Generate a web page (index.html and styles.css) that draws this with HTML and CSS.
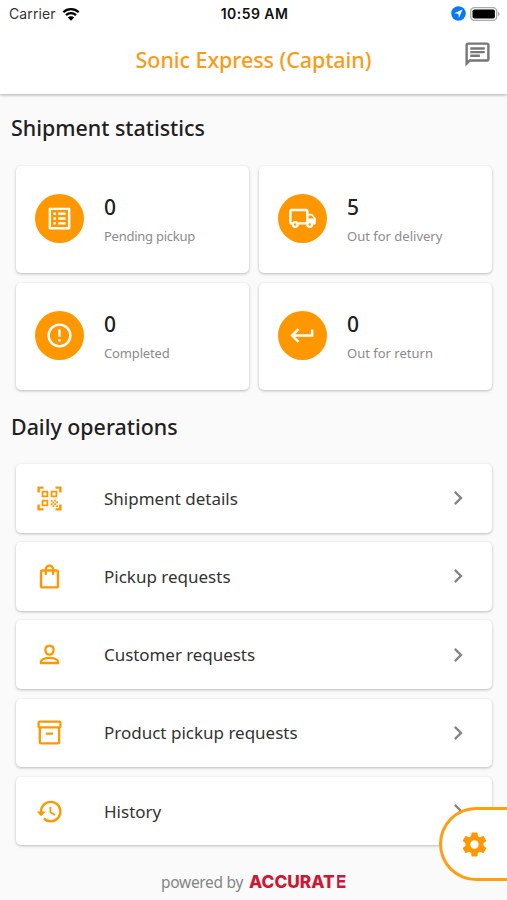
FILE: index.html
```html
<!DOCTYPE html>
<html lang="en">
<head>
<meta charset="utf-8">
<meta name="viewport" content="width=device-width">
<title>Sonic Express (Captain)</title>
<link rel="stylesheet" href="styles.css">
</head>
<body>
<header class="header">
  <div class="status">
    <div class="status-side"><span class="carrier">Carrier</span>
      <svg class="wifi" viewBox="0 0 18 14"><path d="M1.3 5.2a11 11 0 0 1 15.4 0M4 8.2a7.2 7.2 0 0 1 10 0" fill="none" stroke="#000" stroke-width="2.3"/><path d="M9 13.8 5.8 10.600a4.600 4.600 0 0 1 6.400 0z"/></svg>
    </div>
    <span class="time">10:59 AM</span>
    <div class="status-side status-right">
      <svg class="location" viewBox="0 0 15 15"><circle cx="7.500" cy="7.500" r="7.300" fill="#087bf4"/><path d="M11.500 3.500 3.200 7.200l4.200.5.500 4.200z" fill="#fff"/></svg>
      <svg class="battery" viewBox="0 0 30 14"><rect x=".7" y=".7" width="26" height="12.600" rx="3.600" fill="#fff" stroke="#aaa" stroke-width="1.300"/><rect x="2.500" y="2.500" width="22.400" height="9" rx="1.800"/><path d="M28 5c2 .6 2 3.400 0 4z" fill="#aaa"/></svg>
    </div>
  </div>
  <div class="appbar">
    <h1 class="title">Sonic Express (Captain)</h1>
    <svg class="icon chat" viewBox="0 0 24 24"><path d="M4 4h16v12H5.170L4 17.170V4m0-2c-1.100 0-1.990.9-1.990 2L2 22l4-4h14c1.100 0 2-.9 2-2V4c0-1.100-.9-2-2-2H4zm2 10h8v2H6v-2zm0-3h12v2H6V9zm0-3h12v2H6V6z"/></svg>
  </div>
</header>
<main class="content">
  <h2 class="heading heading-stats">Shipment statistics</h2>
  <section class="stats">
    <article class="card stat"><span class="badge"><svg class="icon" viewBox="0 0 24 24"><path d="M19 5v14H5V5h14m1.100-2H3.900c-.5 0-.9.4-.9.900v16.200c0 .4.4.9.9.900h16.200c.4 0 .9-.5.9-.9V3.900c0-.5-.5-.9-.9-.9zM11 7h6v2h-6V7zm0 4h6v2h-6v-2zm0 4h6v2h-6v-2zM7 7h2v2H7V7zm0 4h2v2H7v-2zm0 4h2v2H7v-2z"/></svg></span><div><div class="count">0</div><div class="label pending">Pending pickup</div></div></article>
    <article class="card stat"><span class="badge"><svg class="icon" viewBox="0 0 24 24"><path fill-rule="evenodd" d="M19.500 8H17V6c0-1.100-.9-2-2-2H3c-1.100 0-2 .9-2 2v9c0 1.100.9 2 2 2 0 1.660 1.340 3 3 3s3-1.340 3-3h6c0 1.660 1.340 3 3 3s3-1.340 3-3h1c.55 0 1-.45 1-1v-3.330c0-.43-.14-.85-.4-1.200L20.300 8.400c-.19-.25-.49-.4-.8-.4zM6 18a1 1 0 1 1 0-2 1 1 0 0 1 0 2zm9-3H8.220a3 3 0 0 0-4.440 0H3V6h12v9zm3 3a1 1 0 1 1 0-2 1 1 0 0 1 0 2zm-1-6V9.500h2.500l1.960 2.500H17z"/></svg></span><div><div class="count">5</div><div class="label">Out for delivery</div></div></article>
    <article class="card stat"><span class="badge"><svg class="icon" viewBox="0 0 24 24"><path d="M11 15h2v2h-2zm0-8h2v6h-2z"/><circle cx="12" cy="12" r="9" fill="none" stroke="currentColor" stroke-width="2"/></svg></span><div><div class="count">0</div><div class="label completed">Completed</div></div></article>
    <article class="card stat"><span class="badge"><svg class="icon" viewBox="0 0 24 24"><path d="M19 7v4H5.830l3.580-3.590L8 6l-6 6 6 6 1.410-1.410L5.830 13H21V7z"/></svg></span><div><div class="count">0</div><div class="label">Out for return</div></div></article>
  </section>
  <h2 class="heading heading-daily">Daily operations</h2>
  <nav class="operations">
    <a class="card operation"><svg class="icon" viewBox="0 0 24 24"><path d="M2 7V2h5v2H4v3zM17 2h5v5h-2V4h-3zM2 17h2v3h3v2H2zM20 17h2v5h-5v-2h3z"/><path d="M6.250 6.250h4v4h-4zM13.750 6.250h4v4h-4zM6.250 13.750h4v4h-4z" fill="none" stroke="currentColor" stroke-width="1.500"/><path d="M13 13h1.500v1.500H13zM16 13h1.500v1.500H16zM14.500 14.500H16V16h-1.500zM17.500 14.500H19V16h-1.500zM13 16h1.500v1.500H13zM16 16h1.500v1.500H16zM14.500 17.500H16V19h-1.500zM17.500 17.500H19V19h-1.500z"/></svg><span class="name">Shipment details</span><svg class="icon chevron" viewBox="0 0 24 24"><path d="M10 6 8.590 7.410 13.170 12l-4.580 4.590L10 18l6-6z"/></svg></a>
    <a class="card operation"><svg class="icon" viewBox="0 0 24 24"><path d="M18 6h-2c0-2.210-1.790-4-4-4S8 3.790 8 6H6c-1.100 0-2 .9-2 2v12c0 1.100.9 2 2 2h12c1.100 0 2-.9 2-2V8c0-1.100-.9-2-2-2zm-6-2c1.100 0 2 .9 2 2h-4c0-1.100.9-2 2-2zm6 16H6V8h2v2c0 .55.450 1 1 1s1-.45 1-1V8h4v2c0 .55.450 1 1 1s1-.45 1-1V8h2v12z"/></svg><span class="name">Pickup requests</span><svg class="icon chevron" viewBox="0 0 24 24"><path d="M10 6 8.590 7.410 13.170 12l-4.580 4.590L10 18l6-6z"/></svg></a>
    <a class="card operation"><svg class="icon" viewBox="0 0 24 24"><g fill="none" stroke="currentColor" stroke-width="1.900"><path d="M12 4.900c-2.400 0-3.400 1.300-3.400 3.200 0 2.200 1 4 3.400 4s3.400-1.800 3.400-4c0-1.900-1-3.200-3.400-3.200z"/><path d="M4.950 19.050v-1.200c0-1.700 3.300-3 7.050-3s7.050 1.300 7.050 3v1.200z"/></g></svg><span class="name customer">Customer requests</span><svg class="icon chevron" viewBox="0 0 24 24"><path d="M10 6 8.590 7.410 13.170 12l-4.580 4.590L10 18l6-6z"/></svg></a>
    <a class="card operation"><svg class="icon" viewBox="0 0 24 24"><g fill="none" stroke="currentColor" stroke-width="1.900"><rect x="2.950" y="2.950" width="18.100" height="4.800" rx="1"/><path d="M4 7.750v12.300q0 1 1 1h14q1 0 1-1V7.750M9 13h6"/></g></svg><span class="name">Product pickup requests</span><svg class="icon chevron" viewBox="0 0 24 24"><path d="M10 6 8.590 7.410 13.170 12l-4.580 4.590L10 18l6-6z"/></svg></a>
    <a class="card operation"><svg class="icon" viewBox="0 0 24 24"><path d="M13 3a9 9 0 0 0-9 9H1.500L5 15.900 9 12H6c0-3.870 3.130-7 7-7s7 3.130 7 7-3.130 7-7 7c-1.930 0-3.680-.79-4.940-2.060l-1.420 1.420A8.950 8.950 0 0 0 13 21a9 9 0 0 0 0-18zm-1 5v5l4.280 2.540.72-1.210-3.500-2.080V8H12z"/></svg><span class="name">History</span><svg class="icon chevron" viewBox="0 0 24 24"><path d="M10 6 8.590 7.410 13.170 12l-4.580 4.590L10 18l6-6z"/></svg></a>
  </nav>
</main>
<footer class="footer"><span class="powered">powered by</span><span class="brand">ACCURAT<span class="brand-e">E</span></span></footer>
<button class="settings" aria-label="Settings"><svg class="icon" viewBox="0 0 24 24"><path d="M19.430 12.980c.04-.32.070-.64.070-.98s-.03-.66-.07-.98l2.110-1.650c.19-.15.240-.42.120-.64l-2-3.460c-.12-.22-.39-.3-.61-.22l-2.490 1c-.52-.4-1.080-.73-1.690-.98l-.38-2.650C14.460 2.180 14.250 2 14 2h-4c-.25 0-.46.18-.49.420l-.38 2.650c-.61.250-1.170.590-1.690.980l-2.490-1c-.23-.09-.49 0-.61.220l-2 3.460c-.13.220-.07.490.120.640l2.110 1.650c-.04.320-.07.650-.07.980s.03.660.070.980l-2.110 1.650c-.19.150-.24.420-.12.640l2 3.460c.12.220.39.300.61.220l2.490-1c.52.400 1.080.730 1.690.980l.38 2.650c.03.240.240.420.490.420h4c.25 0 .46-.18.490-.42l.38-2.650c.61-.25 1.170-.59 1.690-.98l2.490 1c.23.090.490 0 .61-.22l2-3.460c.12-.22.070-.49-.12-.64l-2.110-1.650zM12 15.500a3.500 3.500 0 1 1 0-7 3.500 3.500 0 0 1 0 7z"/></svg></button>
</body>
</html>
```
FILE: styles.css
```css
* { box-sizing: border-box; }
body { margin: 0; height: 900px; overflow: hidden; position: relative; background: #fafafa; color: #202020; font-family: "Noto Sans", "Open Sans", sans-serif; }
h1, h2 { margin: 0; font-weight: 500; }
.icon { display: block; flex: none; width: 29px; height: 29px; fill: currentColor; }
.header { height: 94px; background: #fff; box-shadow: 0 1px 3px rgba(0,0,0,.32); }
.status { display: grid; grid-template-columns: 1fr auto 1fr; align-items: center; height: 27px; padding: 0 7px 0 9px; font-family: Inter, sans-serif; font-size: 14px; }
.status-side { display: flex; align-items: center; gap: 6px; }
.status-right { justify-content: flex-end; gap: 4px; }
.carrier { color: #333; letter-spacing: .1px; }
.time { font-weight: 600; font-size: 14px; letter-spacing: .45px; color: #111; }
.wifi { width: 18px; height: 14px; }
.location { width: 15px; height: 15px; }
.battery { width: 30px; height: 14px; }
.appbar { display: grid; grid-template-columns: 45px 1fr 45px; align-items: center; height: 65px; }
.title { grid-column: 2; text-align: center; color: #f99b18; font-size: 21.5px; letter-spacing: -.07px; line-height: 30px; white-space: nowrap; }
.chat { color: #777; margin: -10px 0 0 1px; }
.content { padding: 0 15px 0 16px; }
.heading { margin-left: -5px; font-size: 21.4px; line-height: 30px; white-space: nowrap; }
.heading-stats { padding-top: 19px; height: 71.5px; }
.card { background: #fff; border-radius: 5px; box-shadow: 0 1px 3px rgba(0,0,0,.26); }
.stats { display: grid; grid-template-columns: 1fr 1fr; grid-auto-rows: 107px; gap: 10px; }
.stat { display: flex; align-items: center; gap: 20px; padding: 0 19px 2px; }
.badge { display: grid; place-items: center; width: 49px; height: 49px; border-radius: 50%; background: #ff9800; color: #fff; }
.count { font-size: 21px; line-height: 28px; font-weight: 500; margin-top: 2px; }
.label { font-size: 13px; line-height: 20px; margin-top: 5px; color: #8b8b8b; white-space: nowrap; }
.pending { letter-spacing: -.25px; }
.completed { letter-spacing: -.15px; }
.heading-daily { padding-top: 22px; height: 74.5px; }
.operations { display: grid; gap: 9.600px; }
.operation { display: flex; align-items: center; height: 68.600px; padding: 0 20px 0 19px; color: #ff9800; }
.name { margin-left: 40px; color: #333; font-size: 17px; white-space: nowrap; }
.customer { letter-spacing: -.06px; }
.chevron { width: 28px; height: 28px; margin-left: auto; color: #858585; }
.footer { display: flex; align-items: center; height: 24px; margin-top: 24.5px; padding-left: 161px; font-size: 15.500px; color: #858585; white-space: nowrap; }
.powered { letter-spacing: -.3px; }
.brand { margin-left: 6px; font-family: Inter, sans-serif; font-size: 17.300px; font-weight: 800; color: #cf1733; }
.brand-e { position: relative; display: inline-block; transform: scaleX(1.08); transform-origin: left; }
.brand-e::after { content: ""; position: absolute; left: 0; top: 0; width: 2.400px; height: 100%; background: #fafafa; }
.settings { position: absolute; top: 807px; right: 0; display: flex; align-items: center; width: 68px; height: 74px; padding: 0 0 0 18px; border: solid #ff9d13; border-width: 3px 0 3px 3px; border-radius: 37px 0 0 37px; background: #fff; color: #ff9800; }
```
